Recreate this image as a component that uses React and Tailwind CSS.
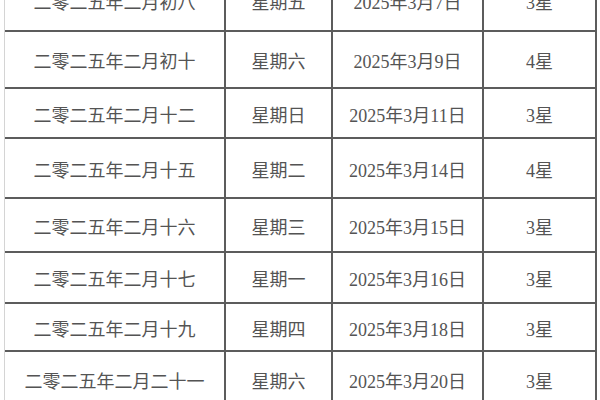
import React from "react";

const rows = [
  { h: "h-[62px]", a: "二零二五年二月初八", b: "星期五", c: "2025年3月7日", d: "3星" },
  { h: "h-[57px]", a: "二零二五年二月初十", b: "星期六", c: "2025年3月9日", d: "4星" },
  { h: "h-[50px]", a: "二零二五年二月十二", b: "星期日", c: "2025年3月11日", d: "3星" },
  { h: "h-[60px]", a: "二零二五年二月十五", b: "星期二", c: "2025年3月14日", d: "4星" },
  { h: "h-[54px]", a: "二零二五年二月十六", b: "星期三", c: "2025年3月15日", d: "3星" },
  { h: "h-[51px]", a: "二零二五年二月十七", b: "星期一", c: "2025年3月16日", d: "3星" },
  { h: "h-[48px]", a: "二零二五年二月十九", b: "星期四", c: "2025年3月18日", d: "3星" },
  { h: "h-[56px]", a: "二零二五年二月二十一", b: "星期六", c: "2025年3月20日", d: "3星" },
];

export default function App() {
  return (
    <div className="w-[600px] h-[400px] overflow-hidden bg-white">
      <div
        className="mt-[-30px] ml-[4px] w-[593px] border-l border-[#d4d4d4] text-[18px] text-[#545454]"
        style={{ fontFamily: '"Liberation Serif", "Noto Sans CJK SC", serif' }}
      >
        {rows.map((r, i) => (
          <div key={i} className={`flex ${r.h} border-b-2 border-[#5c5c5c]`}>
            <div className="w-[221px] pt-[6px] flex items-center justify-center border-r-2 border-[#5c5c5c]">
              {r.a}
            </div>
            <div className="w-[107px] pt-[6px] flex items-center justify-center border-r-2 border-[#5c5c5c]">
              {r.b}
            </div>
            <div className="w-[151px] pt-[6px] flex items-center justify-center border-r-2 border-[#5c5c5c]">
              {r.c}
            </div>
            <div className="w-[113px] pt-[6px] flex items-center justify-center border-r-2 border-[#5c5c5c]">
              {r.d}
            </div>
          </div>
        ))}
      </div>
    </div>
  );
}
